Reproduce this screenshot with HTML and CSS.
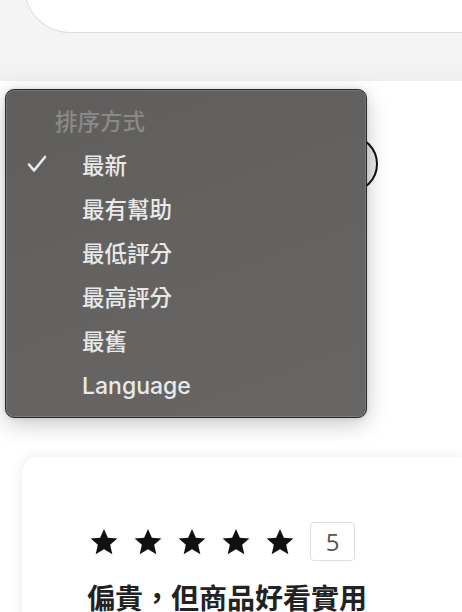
FILE: index.html
```html
<!DOCTYPE html>
<html lang="zh-Hant">
<head>
<meta charset="utf-8">
<link rel="stylesheet" href="styles.css">
</head>
<body>
<div class="page">
  <div class="top-band">
    <div class="top-card"></div>
  </div>
  <div class="middle">
    <div class="round-btn"></div>
  </div>
  <div class="review-card">
    <div class="rating-row">
      <div class="stars">
        <svg class="star" viewBox="0 0 24 24"><path d="M12 1.5l3.1 7.1 7.6.6-5.8 5 1.8 7.5L12 17.7l-6.7 4 1.8-7.5-5.8-5 7.6-.6z"/></svg>
        <svg class="star" viewBox="0 0 24 24"><path d="M12 1.5l3.1 7.1 7.6.6-5.8 5 1.8 7.5L12 17.7l-6.7 4 1.8-7.5-5.8-5 7.6-.6z"/></svg>
        <svg class="star" viewBox="0 0 24 24"><path d="M12 1.5l3.1 7.1 7.6.6-5.8 5 1.8 7.5L12 17.7l-6.7 4 1.8-7.5-5.8-5 7.6-.6z"/></svg>
        <svg class="star" viewBox="0 0 24 24"><path d="M12 1.5l3.1 7.1 7.6.6-5.8 5 1.8 7.5L12 17.7l-6.7 4 1.8-7.5-5.8-5 7.6-.6z"/></svg>
        <svg class="star" viewBox="0 0 24 24"><path d="M12 1.5l3.1 7.1 7.6.6-5.8 5 1.8 7.5L12 17.7l-6.7 4 1.8-7.5-5.8-5 7.6-.6z"/></svg>
      </div>
      <div class="score">5</div>
    </div>
    <h2 class="review-title">偏貴，但商品好看實用</h2>
  </div>

  <div class="menu">
    <div class="menu-header">排序方式</div>
    <div class="menu-item checked">
      <svg class="check" viewBox="0 0 20 18"><path d="M2 9.5l5 6L18 2" fill="none" stroke="#ececec" stroke-width="2.6" stroke-linecap="round" stroke-linejoin="round"/></svg>
      <span>最新</span>
    </div>
    <div class="menu-item"><span>最有幫助</span></div>
    <div class="menu-item"><span>最低評分</span></div>
    <div class="menu-item"><span>最高評分</span></div>
    <div class="menu-item"><span>最舊</span></div>
    <div class="menu-item latin"><span>Language</span></div>
  </div>
</div>
</body>
</html>
```
FILE: styles.css
```css
* { box-sizing: border-box; }
html, body { margin: 0; padding: 0; }
body {
  background: #ffffff;
  font-family: "Noto Sans", "Noto Sans CJK TC", sans-serif;
}
.page {
  position: relative;
  width: 462px;
  height: 612px;
  overflow: hidden;
  background: #ffffff;
}
.top-band {
  height: 81px;
  background: linear-gradient(#f4f4f4 0, #f4f4f4 58px, #efefef 81px);
  overflow: hidden;
}
.top-card {
  margin-left: 24px;
  margin-top: -60px;
  width: 460px;
  height: 93px;
  background: #ffffff;
  border: 1px solid #dcdcdc;
  border-right: none;
  border-radius: 0 0 0 46px;
}
.middle {
  height: 376px;
  padding-top: 54px;
  padding-left: 320px;
}
.round-btn {
  width: 58px;
  height: 58px;
  border-radius: 50%;
  border: 2.5px solid #111;
  background: #e9e9e9;
}
.review-card {
  margin-left: 22px;
  height: 200px;
  background: #ffffff;
  border-radius: 16px 0 0 0;
  box-shadow: 0 0 14px rgba(0, 0, 0, 0.09);
  padding: 65px 0 0 67px;
}
.rating-row {
  display: flex;
  align-items: center;
}
.stars {
  display: flex;
  gap: 14px;
}
.star {
  width: 30px;
  height: 30px;
  fill: #111;
}
.score {
  margin-left: 15px;
  width: 45px;
  height: 39px;
  border: 1.5px solid #dedede;
  border-radius: 4px;
  display: flex;
  align-items: center;
  justify-content: center;
  font-family: "Open Sans", "Noto Sans", sans-serif;
  font-size: 24px;
  color: #555;
}
.review-title {
  margin: 16px 0 0 -2px;
  font-family: "Noto Sans CJK TC", sans-serif;
  font-size: 28px;
  font-weight: 700;
  line-height: 40px;
  color: #222;
}
.menu {
  position: absolute;
  left: 5px;
  top: 89px;
  width: 362px;
  height: 329px;
  background: linear-gradient(160deg, #5f5e5c 0%, #646361 55%, #676664 100%);
  border: 1px solid #2b2b2b;
  border-radius: 9px;
  box-shadow: inset 0 0 0 1px rgba(255, 255, 255, 0.14), 0 6px 22px rgba(0, 0, 0, 0.22), 0 0 4px rgba(0,0,0,0.12);
  padding-top: 8px;
  font-family: "Noto Sans CJK TC", sans-serif;
}
.menu-header {
  height: 44px;
  display: flex;
  align-items: center;
  padding-left: 49px;
  font-size: 22.5px;
  font-weight: 500;
  color: #8b8a88;
}
.menu-item {
  position: relative;
  height: 44px;
  display: flex;
  align-items: center;
  padding-left: 76px;
  font-size: 22.5px;
  font-weight: 500;
  color: #e9e9e9;
}
.menu-item.latin {
  font-family: "Inter", "Noto Sans", sans-serif;
  font-size: 23px;
  font-weight: 500;
  padding-top: 3px;
}
.check {
  position: absolute;
  left: 21px;
  top: 13px;
  width: 20px;
  height: 18px;
}
```
